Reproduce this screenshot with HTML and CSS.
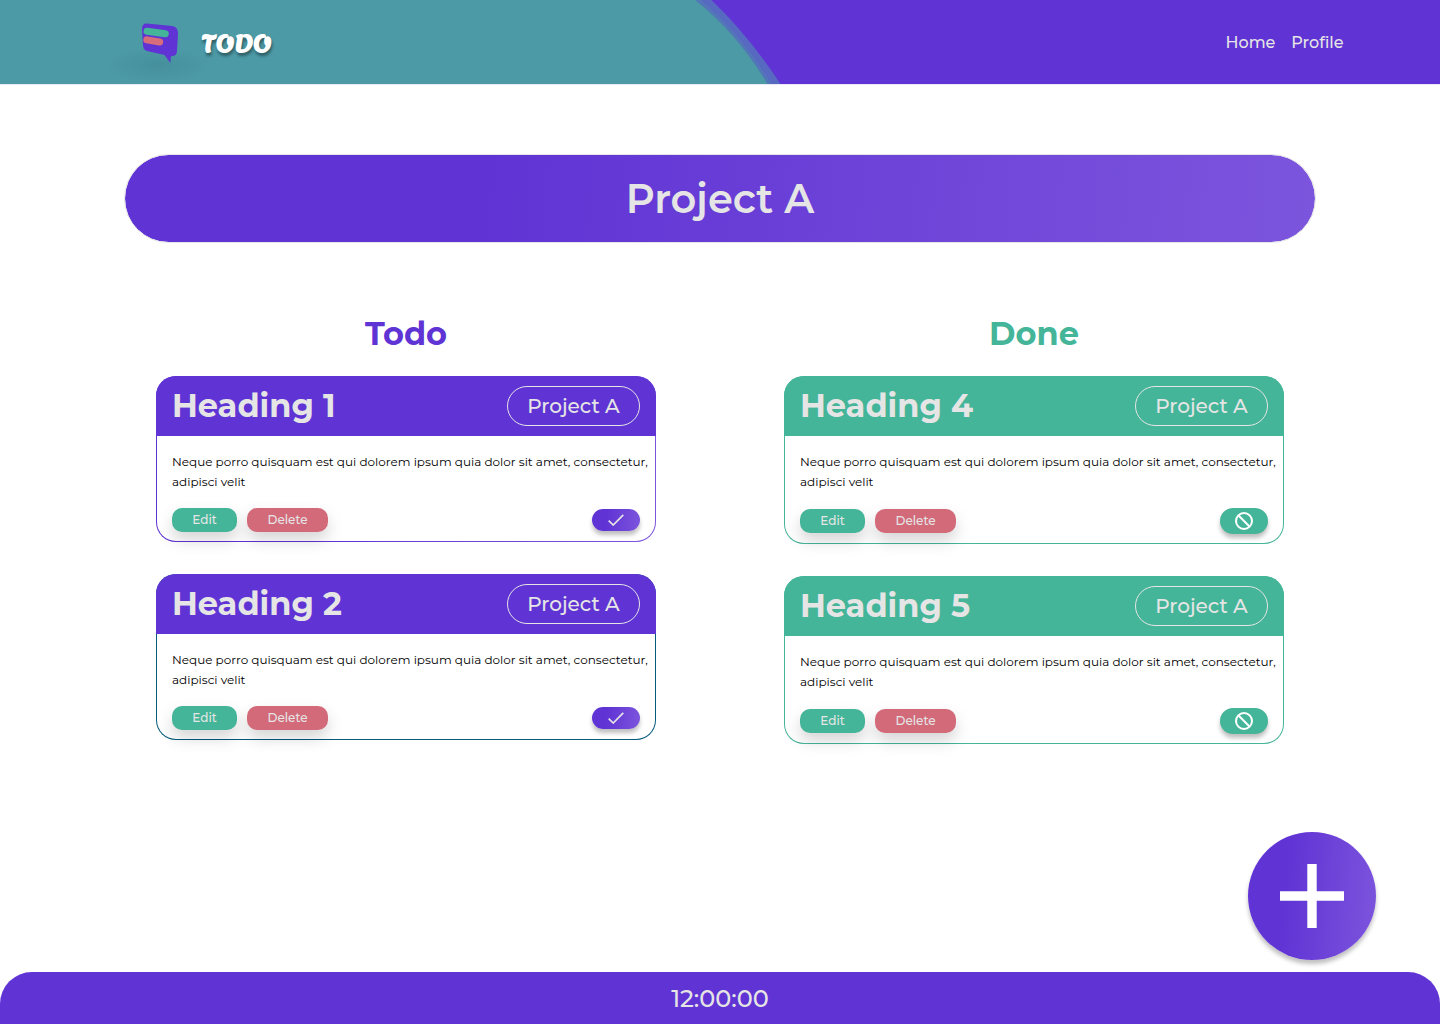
FILE: index.html
```html
<!DOCTYPE html>
<html lang="en">
<head>
<meta charset="utf-8">
<title>Todo</title>
<link rel="stylesheet" href="styles.css">
</head>
<body>
<svg class="sprite" aria-hidden="true">
  <symbol id="check" viewBox="0 0 16 12"><path d="M.7 6.700 5.200 11 15.300.8" fill="none" stroke="#e5e5e5" stroke-width="1.7"/></symbol>
  <symbol id="block" viewBox="0 0 18 18"><circle cx="9" cy="9" r="8" fill="none" stroke="#fff" stroke-width="2"/><path d="M3.300 3.300 14.700 14.700" stroke="#fff" stroke-width="2"/></symbol>
</svg>
<header class="header">
  <svg class="swoosh" viewBox="0 0 800 84" width="800" height="84">
    <path d="M0 0H711.5Q749 36 780.5 84H0Z" fill="#5769c1"/>
    <path d="M0 0H701Q741 34 771.5 84H0Z" fill="#5376b8"/>
    <path d="M0 0H695Q737 33 767.500 84H0Z" fill="#4c9aa6"/>
  </svg>
  <div class="brand">
    <svg class="logo" width="110" height="84" viewBox="0 0 110 84">
      <defs><radialGradient id="ground"><stop offset="0" stop-color="#28656f" stop-opacity=".2"/><stop offset="1" stop-color="#28656f" stop-opacity="0"/></radialGradient></defs>
      <ellipse cx="58" cy="65" rx="52" ry="17" fill="url(#ground)"/>
      <path d="M47 23.500 72 26Q78 27 78 33L77 51Q77 56 72 56L71 56.500 70.300 63 64.500 55 47 51Q43 50 43 45L42 29Q42 23 47 23.500Z" fill="#6033d4"/>
      <path d="M47 31.200 65.300 33.700" stroke="#44b598" stroke-width="7" stroke-linecap="round"/>
      <path d="M46.800 39.900 59.700 42" stroke="#d76d7b" stroke-width="7" stroke-linecap="round"/>
    </svg>
    <span class="wordmark">TODO</span>
  </div>
  <nav class="nav"><a>Home</a><a>Profile</a></nav>
</header>
<main class="main">
  <h1 class="title">Project A</h1>
  <div class="board">
    <section class="column todo">
      <h2 class="column-title">Todo</h2>
      <article class="card">
        <div class="card-head"><h3>Heading 1</h3><span class="tag">Project A</span></div>
        <div class="card-body">
          <p>Neque porro quisquam est qui dolorem ipsum quia dolor sit amet, consectetur, adipisci velit</p>
          <div class="actions"><button class="btn edit">Edit</button><button class="btn delete">Delete</button><button class="state"><svg width="16" height="12"><use href="#check"/></svg></button></div>
        </div>
      </article>
      <article class="card alt">
        <div class="card-head"><h3>Heading 2</h3><span class="tag">Project A</span></div>
        <div class="card-body">
          <p>Neque porro quisquam est qui dolorem ipsum quia dolor sit amet, consectetur, adipisci velit</p>
          <div class="actions"><button class="btn edit">Edit</button><button class="btn delete">Delete</button><button class="state"><svg width="16" height="12"><use href="#check"/></svg></button></div>
        </div>
      </article>
    </section>
    <section class="column done">
      <h2 class="column-title">Done</h2>
      <article class="card">
        <div class="card-head"><h3>Heading 4</h3><span class="tag">Project A</span></div>
        <div class="card-body">
          <p>Neque porro quisquam est qui dolorem ipsum quia dolor sit amet, consectetur, adipisci velit</p>
          <div class="actions"><button class="btn edit">Edit</button><button class="btn delete">Delete</button><button class="state"><svg width="18" height="18"><use href="#block"/></svg></button></div>
        </div>
      </article>
      <article class="card">
        <div class="card-head"><h3>Heading 5</h3><span class="tag">Project A</span></div>
        <div class="card-body">
          <p>Neque porro quisquam est qui dolorem ipsum quia dolor sit amet, consectetur, adipisci velit</p>
          <div class="actions"><button class="btn edit">Edit</button><button class="btn delete">Delete</button><button class="state"><svg width="18" height="18"><use href="#block"/></svg></button></div>
        </div>
      </article>
    </section>
  </div>
</main>
<button class="fab" aria-label="Add"><svg width="64" height="64" viewBox="0 0 64 64"><path d="M32 0V64M0 32H64" stroke="#fff" stroke-width="9.400"/></svg></button>
<footer class="footer"><time>12:00:00</time></footer>
</body>
</html>
```
FILE: styles.css
```css
:root {
  --purple: #6033d4;
  --green: #44b598;
  --red: #d36a7a;
  --light: #e5e5e5;
  --fade: linear-gradient(95deg, #6033d4 30%, #7c55dd 100%);
}
* { box-sizing: border-box; }
body {
  margin: 0;
  height: 1024px;
  display: flex;
  flex-direction: column;
  position: relative;
  overflow: hidden;
  background: #fff;
  font-family: Montserrat, Inter, sans-serif;
}
h1, h2, h3, p { margin: 0; }
button { border: 0; padding: 0; font-family: inherit; }
.sprite { position: absolute; width: 0; height: 0; }

.header {
  position: relative;
  flex: none;
  height: 85px;
  border-bottom: 1px solid #ece9f6;
  background: var(--purple);
  display: flex;
  justify-content: space-between;
  padding: 0 96.5px 0 100px;
}
.swoosh { position: absolute; left: 0; top: 0; }
.brand { position: relative; display: flex; align-items: center; height: 84px; }
.wordmark {
  margin: 4px 0 0 -8.500px;
  color: #fff;
  font: 400 24px/30px "Lemon", "Merienda One", "Merienda", Lato, sans-serif;
  text-shadow: 1px 3px 3px rgba(0, 0, 0, .4);
}
.nav { display: flex; align-items: center; gap: 16px; height: 85px; color: var(--light); font-size: 16px; font-weight: 500; }

.main { flex: 1; padding: 69px 124px 0; }
.title {
  height: 89px;
  border: 1px solid var(--light);
  border-radius: 44.5px;
  background: var(--fade) padding-box;
  color: var(--light);
  font-size: 40px;
  font-weight: 600;
  line-height: 88px;
  text-align: center;
}
.board { display: grid; grid-template-columns: 500px 500px; gap: 128px; padding: 71px 32px 0; align-items: start; }
.column { display: flex; flex-direction: column; gap: 32px; }
.column-title { height: 40px; margin-bottom: -10px; text-align: center; font-size: 32px; font-weight: 700; line-height: 40px; color: var(--accent); }
.todo { --accent: var(--purple); --edge: var(--fade); --state: var(--fade); --state-height: 22px; }
.done { --accent: var(--green); --edge: linear-gradient(#44b598, #44b598); --state: var(--green); --state-height: 26px; }
.alt { --edge: linear-gradient(#045b7b, #045b7b); }
.card { border: 1px solid transparent; border-radius: 20px; background: linear-gradient(#fff, #fff) padding-box, var(--edge) border-box; }
.card-head {
  height: 60px;
  margin: -1px -1px 0;
  padding: 0 16px;
  display: flex;
  align-items: center;
  justify-content: space-between;
  border-radius: 20px 20px 0 0;
  background: var(--accent);
  color: var(--light);
}
.card-head h3 { font-size: 32px; font-weight: 700; line-height: 40px; }
.tag { width: 133px; height: 40px; border: 1px solid var(--light); border-radius: 20px; font-size: 20px; font-weight: 500; line-height: 38px; text-align: center; }
.card-body { padding: 16px 3px 9px 15px; display: flex; flex-direction: column; gap: 16px; }
.card-body p { font-size: 12px; line-height: 20px; color: #000; }
.actions { display: flex; align-items: center; gap: 10px; padding-right: 12px; }
.btn { height: 24px; border-radius: 10px; color: var(--light); font-size: 12px; line-height: 24px; font-weight: 500; box-shadow: 0 8px 16px rgba(0, 0, 0, .17); }
.edit { width: 65px; background: var(--green); }
.delete { width: 81px; background: var(--red); }
.state { margin-left: auto; width: 48px; height: var(--state-height); border-radius: 13px; background: var(--state); display: flex; align-items: center; justify-content: center; box-shadow: 0 4px 4px rgba(0, 0, 0, .25); }

.fab { position: absolute; right: 64px; bottom: 64px; width: 128px; height: 128px; border-radius: 50%; background: var(--fade); display: grid; place-items: center; box-shadow: 0 4px 4px rgba(0, 0, 0, .25); }
.footer { height: 52px; border-radius: 32px 32px 0 0; background: var(--purple); color: var(--light); font-size: 24px; font-weight: 500; line-height: 53px; text-align: center; }
```
